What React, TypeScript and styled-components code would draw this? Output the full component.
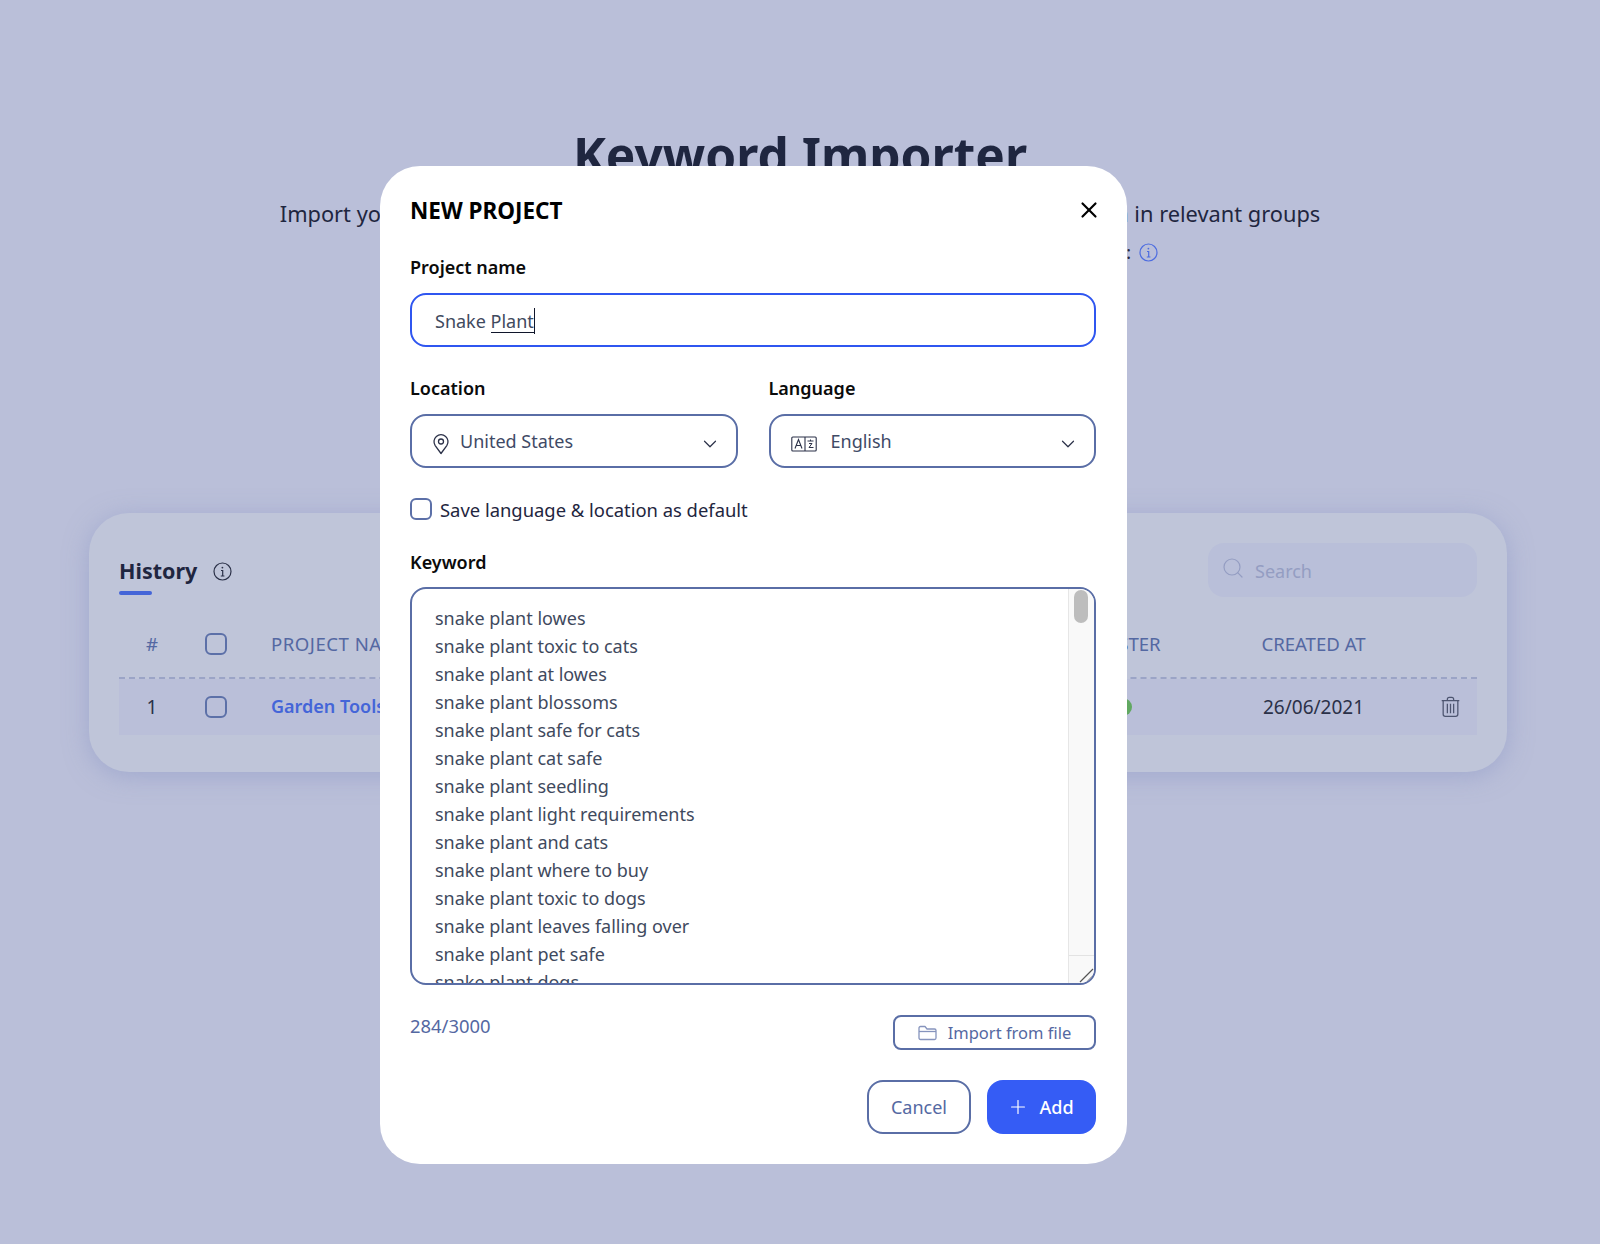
import React from 'react';
import styled, { createGlobalStyle } from 'styled-components';
import { ChevronDown, Plus, Search, X } from 'lucide-react';

const GlobalStyle = createGlobalStyle`
  html, body {
    margin: 0;
    padding: 0;
    background: #babfd9;
  }
  * {
    box-sizing: border-box;
  }
`;

const Page = styled.div`
  position: relative;
  width: 1600px;
  height: 1244px;
  overflow: hidden;
  background: #babfd9;
  font-family: 'Noto Sans', 'Open Sans', sans-serif;
  color: #1f2640;
`;

const Hero = styled.header`
  display: flex;
  flex-direction: column;
  align-items: center;
  padding-top: 122px;
  height: 513px;
`;

const Heading = styled.h1`
  margin: 0;
  font-size: 49.6px;
  line-height: 66px;
  font-weight: 700;
  color: #1f2640;
`;

const Subtitle = styled.p`
  margin: 11px 0 0;
  font-size: 21.8px;
  line-height: 30px;
  white-space: nowrap;
  color: #1f2640;
`;

const Credits = styled.div`
  display: flex;
  align-items: center;
  gap: 8px;
  margin-top: 8px;
  font-size: 18px;
  line-height: 30px;
  white-space: nowrap;
  color: #1f2640;
`;

const HistoryCard = styled.section`
  margin: 0 93px 0 89px;
  height: 259px;
  padding: 30px 30px 37px;
  border-radius: 40px;
  background: #bfc5d9;
  box-shadow: 0 4px 24px rgba(135, 148, 195, 0.5);
`;

const CardTop = styled.div`
  display: flex;
  justify-content: space-between;
  height: 54px;
`;

const TitleGroup = styled.div`
  display: flex;
  gap: 16px;
  padding-top: 13px;

  svg {
    margin-top: 6px;
  }
`;

const CardTitle = styled.h2`
  position: relative;
  margin: 0;
  height: 30px;
  font-size: 21.5px;
  line-height: 30px;
  font-weight: 700;
  color: #1f2640;

  &::after {
    content: '';
    position: absolute;
    left: 0;
    top: 35px;
    width: 33px;
    height: 4px;
    border-radius: 2px;
    background: #4465d8;
  }
`;

const SearchBox = styled.div`
  display: flex;
  align-items: center;
  gap: 10px;
  width: 269px;
  padding: 2px 0 0 13px;
  border-radius: 16px;
  background: #b9bfd9;
  font-size: 18px;
  color: #949dc2;

  svg {
    margin-top: -6px;
  }
`;

const TableRow = styled.div<{ $head?: boolean }>`
  display: grid;
  grid-template-columns: 66px 86px 1fr 244px 139px 94px;
  align-items: center;
  height: ${(p) => (p.$head ? '69px' : '56px')};
  margin-top: ${(p) => (p.$head ? '13px' : '0')};
  font-size: ${(p) => (p.$head ? '18.6px' : '19px')};
  color: ${(p) => (p.$head ? '#5468a2' : '#2b3148')};
  background: ${(p) => (p.$head ? 'transparent' : '#babfd9')};
  border-bottom: ${(p) => (p.$head ? '2px dashed #9ba4c6' : 'none')};
`;

const CenterCell = styled.div`
  display: flex;
  justify-content: center;
  font-weight: 400;
`;

const CheckCell = styled.div`
  padding-left: 20px;
  display: flex;
`;

const RowCheck = styled.span`
  display: block;
  flex: none;
  width: 22px;
  height: 22px;
  border: 2px solid #5c70a8;
  border-radius: 6px;
`;

const ProjectHead = styled.div`
  letter-spacing: 0.5px;
`;

const ProjectLink = styled.span`
  margin-top: -3px;
  font-size: 18px;
  color: #4465d8;
  font-weight: 600;
`;

const StatusDot = styled.span`
  display: block;
  width: 18px;
  height: 18px;
  margin-left: 2px;
  border-radius: 50%;
  background: #61a861;
`;

const ActionCell = styled.div`
  display: flex;
  padding-left: 58px;
`;

const Modal = styled.div`
  position: absolute;
  left: 380px;
  top: 166px;
  width: 747px;
  height: 998px;
  padding: 26px 31px 30px 30px;
  border-radius: 40px;
  background: #ffffff;
  display: flex;
  flex-direction: column;
`;

const ModalHeader = styled.div`
  display: flex;
  align-items: center;
  justify-content: space-between;
  height: 36px;
  color: #000000;
`;

const ModalTitle = styled.h3`
  margin: 0;
  font-size: 22.5px;
  font-weight: 700;
  color: #000000;
`;

const CloseIcon = styled(X)`
  margin-right: -6px;
`;

const FieldLabel = styled.label`
  display: block;
  font-size: 18px;
  line-height: 26px;
  font-weight: 600;
  color: #0b0b0b;
`;

const NameLabel = styled(FieldLabel)`
  margin-top: 26px;
`;

const NameInput = styled.div`
  display: flex;
  align-items: center;
  height: 54px;
  margin-top: 13px;
  padding: 2px 0 0 23px;
  border: 2px solid #2f56f0;
  border-radius: 16px;
  font-size: 18px;
  color: #3f4a5e;
  white-space: pre;
`;

const SpellWord = styled.span`
  display: inline-block;
  line-height: 22px;
  border-bottom: 1px solid #10162b;
`;

const Caret = styled.span`
  display: inline-block;
  width: 1px;
  height: 26px;
  background: #10162b;
`;

const SelectRow = styled.div`
  display: grid;
  grid-template-columns: 1fr 1fr;
  gap: 31px;
  margin-top: 28px;
`;

const SelectBox = styled.div<{ $gap: number }>`
  display: flex;
  align-items: center;
  gap: ${(p) => p.$gap}px;
  height: 54px;
  margin-top: 13px;
  padding: 0 15px 0 20px;
  border: 2px solid #5a6ea6;
  border-radius: 16px;
  font-size: 18px;
  color: #3f4a66;

  svg {
    margin-top: 6px;
  }
`;

const SelectText = styled.span`
  flex: 1;
`;

const DefaultRow = styled.label`
  display: flex;
  align-items: center;
  gap: 8px;
  margin-top: 29px;
  height: 24px;
  font-size: 18.4px;
  color: #1f2640;
`;

const KeywordLabel = styled(FieldLabel)`
  margin-top: 28px;
`;

const KeywordArea = styled.div`
  position: relative;
  height: 398px;
  margin-top: 12px;
  padding: 15px 23px 0;
  border: 2px solid #5a6ea6;
  border-radius: 16px;
  overflow: hidden;
  font-size: 18px;
  line-height: 28px;
  color: #3f4a5e;
`;

const KeywordLine = styled.div`
  white-space: nowrap;
`;

const ScrollTrack = styled.div`
  position: absolute;
  top: 0;
  right: 0;
  bottom: 0;
  width: 26px;
  background: #f9f9f9;
  border-left: 1px solid #e6e6e6;
`;

const ScrollThumb = styled.div`
  position: absolute;
  top: 1px;
  left: 5px;
  width: 14px;
  height: 33px;
  border-radius: 7px;
  background: #bdbdbd;
`;

const ResizeCorner = styled.div`
  position: absolute;
  left: 0;
  right: 0;
  bottom: 0;
  height: 28px;
  border-top: 1px solid #e3e3e3;
`;

const ResizeIcon = styled.svg`
  position: absolute;
  right: 0;
  bottom: 0;
`;

const CountRow = styled.div`
  display: flex;
  justify-content: space-between;
  align-items: flex-start;
  margin-top: 29px;
`;

const Counter = styled.span`
  font-size: 18.4px;
  line-height: 24px;
  color: #5468a2;
`;

const ImportButton = styled.button`
  display: flex;
  align-items: center;
  justify-content: center;
  gap: 11px;
  width: 203px;
  height: 35px;
  margin-top: 1px;
  padding: 0;
  border: 2px solid #5a6ea6;
  border-radius: 8px;
  background: #ffffff;
  font-family: inherit;
  font-size: 16.5px;
  color: #5468a2;
`;

const ActionRow = styled.div`
  display: flex;
  justify-content: flex-end;
  gap: 16px;
  margin-top: 30px;
`;

const CancelButton = styled.button`
  width: 104px;
  height: 54px;
  border: 2px solid #5a6ea6;
  border-radius: 16px;
  background: #ffffff;
  font-family: inherit;
  font-size: 18px;
  color: #5468a2;
`;

const AddButton = styled.button`
  display: flex;
  align-items: center;
  justify-content: center;
  gap: 10px;
  width: 109px;
  height: 54px;
  padding: 0 2px 0 0;
  border: none;
  border-radius: 16px;
  background: #355cf5;
  font-family: inherit;
  font-size: 18px;
  font-weight: 500;
  color: #ffffff;
`;

const InfoIcon = ({ color, size = 19 }: { color: string; size?: number }) => (
  <svg width={size} height={size} viewBox="0 0 19 19" fill="none" stroke={color}>
    <circle cx="9.5" cy="9.5" r="8.5" strokeWidth="1.2" />
    <path d="M8 8.5h1.7V14M7.8 14h3.6" strokeWidth="1.2" />
    <circle cx="9.4" cy="5.6" r="0.9" fill={color} stroke="none" />
  </svg>
);

const PinIcon = () => (
  <svg width="18" height="22" viewBox="0 0 18 22" fill="none" stroke="#2b3148" strokeWidth="1.3">
    <path d="M9 20.5 3.2 12.6A7 7 0 1 1 14.8 12.6Z" strokeLinejoin="round" />
    <circle cx="9" cy="8.5" r="2.5" />
  </svg>
);

const TranslateIcon = () => (
  <svg width="26" height="16" viewBox="0 0 26 16" fill="none" stroke="#2b3148" strokeWidth="1.1">
    <rect x="0.8" y="1" width="24.4" height="14" rx="1" />
    <path d="M14 1v14" />
    <path d="M4 12.500l3.500-9 3.500 9M5.300 9.500h4.400" />
    <path d="M16.500 5h6M19.500 3.500V5M18 7.500h3l-3 4h4.500" strokeWidth="1" />
  </svg>
);

const FolderIcon = () => (
  <svg width="19" height="16" viewBox="0 0 19 16" fill="none" stroke="#8694bd" strokeWidth="1.3">
    <path d="M1 3a1.500 1.500 0 0 1 1.500-1.500h4.500l2 2.500h7.500A1.500 1.500 0 0 1 18 5.500V13a1.500 1.500 0 0 1-1.500 1.500h-14A1.500 1.500 0 0 1 1 13Z" strokeLinejoin="round" />
    <path d="M1 6.500h17" />
  </svg>
);

const TrashIcon = () => (
  <svg width="19" height="22" viewBox="0 0 18 21" fill="none" stroke="#4d5570" strokeWidth="1.2">
    <path d="M0.600 4.500h16.800M6 4.500V3a1.800 1.800 0 0 1 1.800-1.800h2.400A1.800 1.800 0 0 1 12 3v1.500" />
    <path d="M2 4.500v13a2 2 0 0 0 2 2h10a2 2 0 0 0 2-2v-13" />
    <path d="M6 7.500v9M9 7.500v9M12 7.500v9" />
  </svg>
);

const keywords = [
  'snake plant lowes',
  'snake plant toxic to cats',
  'snake plant at lowes',
  'snake plant blossoms',
  'snake plant safe for cats',
  'snake plant cat safe',
  'snake plant seedling',
  'snake plant light requirements',
  'snake plant and cats',
  'snake plant where to buy',
  'snake plant toxic to dogs',
  'snake plant leaves falling over',
  'snake plant pet safe',
  'snake plant dogs',
];

const App: React.FC = () => {
  return (
    <Page>
      <GlobalStyle />
      <Hero>
        <Heading>Keyword Importer</Heading>
        <Subtitle>Import your keywords list and now let our powerful tool automatically cluster them in relevant groups</Subtitle>
        <Credits>
          <span>You can import keywords up to limits of your plan, remaining keywords to import:</span>
          <InfoIcon color="#4d6ce0" />
        </Credits>
      </Hero>

      <HistoryCard>
        <CardTop>
          <TitleGroup>
            <CardTitle>History</CardTitle>
            <InfoIcon color="#2b3148" />
          </TitleGroup>
          <SearchBox>
            <Search size={24} strokeWidth={1.2} color="#949dc2" />
            <span>Search</span>
          </SearchBox>
        </CardTop>
        <TableRow $head>
          <CenterCell>#</CenterCell>
          <CheckCell><RowCheck /></CheckCell>
          <ProjectHead>PROJECT NAME</ProjectHead>
          <CenterCell>CLUSTER</CenterCell>
          <CenterCell>CREATED AT</CenterCell>
          <div />
        </TableRow>
        <TableRow>
          <CenterCell>1</CenterCell>
          <CheckCell><RowCheck /></CheckCell>
          <ProjectLink>Garden Tools</ProjectLink>
          <CenterCell><StatusDot /></CenterCell>
          <CenterCell>26/06/2021</CenterCell>
          <ActionCell><TrashIcon /></ActionCell>
        </TableRow>
      </HistoryCard>

      <Modal>
        <ModalHeader>
          <ModalTitle>NEW PROJECT</ModalTitle>
          <CloseIcon size={26} strokeWidth={2} />
        </ModalHeader>
        <NameLabel>Project name</NameLabel>
        <NameInput>
          Snake <SpellWord>Plant</SpellWord><Caret />
        </NameInput>
        <SelectRow>
          <div>
            <FieldLabel>Location</FieldLabel>
            <SelectBox $gap={10}>
              <PinIcon />
              <SelectText>United States</SelectText>
              <ChevronDown size={22} strokeWidth={1.3} color="#2b3148" />
            </SelectBox>
          </div>
          <div>
            <FieldLabel>Language</FieldLabel>
            <SelectBox $gap={14}>
              <TranslateIcon />
              <SelectText>English</SelectText>
              <ChevronDown size={22} strokeWidth={1.3} color="#2b3148" />
            </SelectBox>
          </div>
        </SelectRow>
        <DefaultRow>
          <RowCheck />
          Save language &amp; location as default
        </DefaultRow>
        <KeywordLabel>Keyword</KeywordLabel>
        <KeywordArea>
          {keywords.map((k) => (
            <KeywordLine key={k}>{k}</KeywordLine>
          ))}
          <ScrollTrack>
            <ScrollThumb />
            <ResizeCorner>
              <ResizeIcon width="16" height="16" viewBox="0 0 16 16" stroke="#555" strokeWidth="1.2">
                <path d="M2 15 15 2M9 15l6-6" />
              </ResizeIcon>
            </ResizeCorner>
          </ScrollTrack>
        </KeywordArea>
        <CountRow>
          <Counter>284/3000</Counter>
          <ImportButton>
            <FolderIcon />
            Import from file
          </ImportButton>
        </CountRow>
        <ActionRow>
          <CancelButton>Cancel</CancelButton>
          <AddButton>
            <Plus size={22} strokeWidth={1.3} />
            Add
          </AddButton>
        </ActionRow>
      </Modal>
    </Page>
  );
};

export default App;
